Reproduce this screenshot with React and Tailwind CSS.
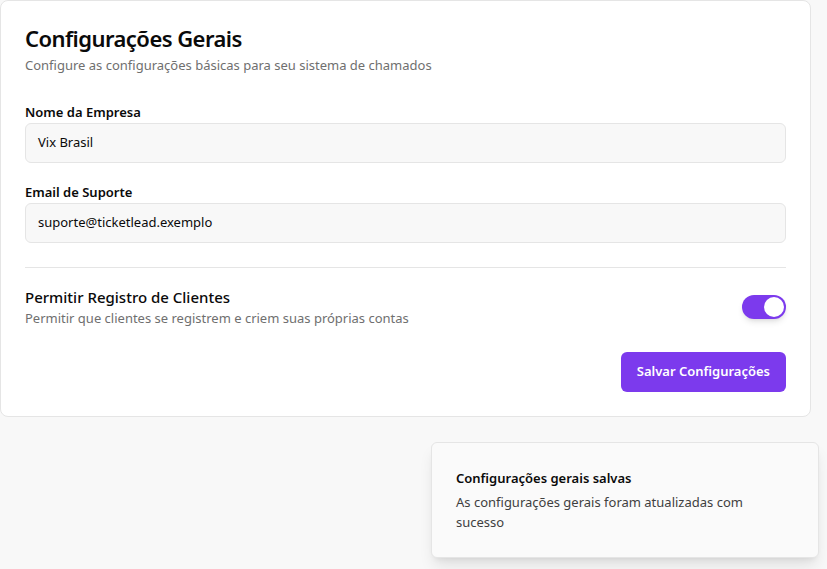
export default function App() {
  return (
    <div
      className="relative h-[569px] w-[827px] overflow-hidden bg-[#f8f8f8] text-[#0a0a0a]"
      style={{ fontFamily: '"Noto Sans", "Open Sans", sans-serif' }}
    >
      <div className="w-[811px] rounded-lg border border-[#e5e5e5] bg-white px-6 pb-6 pt-[21px]">
        <h1 className="text-[22px] font-semibold leading-8 tracking-[-0.025em]">Configurações Gerais</h1>
        <p className="mt-px text-[13px] leading-5 text-[#6f6f6f]">
          Configure as configurações básicas para seu sistema de chamados
        </p>

        <div className="mt-[27px] space-y-[19px]">
          <div>
            <label className="block text-[13px] font-semibold leading-5">Nome da Empresa</label>
            <div className="mt-px flex h-10 items-center rounded-md border border-[#e5e5e5] bg-[#f8f8f8] px-3 text-[13px]">
              Vix Brasil
            </div>
          </div>
          <div>
            <label className="block text-[13px] font-semibold leading-5">Email de Suporte</label>
            <div className="mt-px flex h-10 items-center rounded-md border border-[#e5e5e5] bg-[#f8f8f8] px-3 text-[13px]">
              suporte@ticketlead.exemplo
            </div>
          </div>
        </div>

        <div className="mt-6 border-t border-[#e5e5e5]" />

        <div className="mt-[17px] flex items-center justify-between">
          <div>
            <p className="text-[15px] font-medium leading-6">Permitir Registro de Clientes</p>
            <p className="-mt-px text-[13px] leading-5 text-[#6f6f6f]">
              Permitir que clientes se registrem e criem suas próprias contas
            </p>
          </div>
          <div className="flex h-6 w-11 items-center rounded-full bg-[#7c3aed] p-0.5 shadow-md">
            <div className="ml-auto h-5 w-5 rounded-full bg-white" />
          </div>
        </div>

        <div className="mt-6 flex justify-end">
          <button className="h-10 rounded-md bg-[#7c3aed] px-4 text-[13px] font-semibold text-white">
            Salvar Configurações
          </button>
        </div>
      </div>

      <div className="absolute left-[431px] top-[442px] w-[388px] rounded-md border border-[#e5e5e5] bg-[#fafafa] px-6 py-[25px] shadow-lg">
        <p className="text-[13px] font-semibold leading-5">Configurações gerais salvas</p>
        <p className="mt-1 text-[13px] leading-5 text-[#3f3f3f]">
          As configurações gerais foram atualizadas com sucesso
        </p>
      </div>
    </div>
  )
}
